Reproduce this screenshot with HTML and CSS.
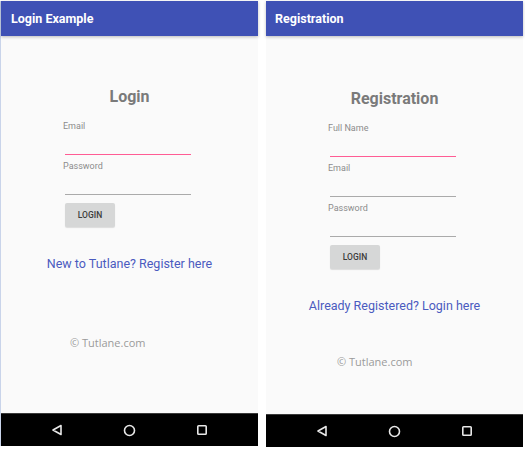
FILE: index.html
```html
<!DOCTYPE html>
<html>
<head>
<meta charset="utf-8">
<link rel="stylesheet" href="styles.css">
</head>
<body>
<div class="screens">
  <div class="phone phone-left">
    <div class="appbar">Login Example</div>
    <div class="content">
      <div class="title">Login</div>
      <div class="form">
        <div class="field">
          <div class="label">Email</div>
          <div class="input focused"></div>
        </div>
        <div class="field">
          <div class="label">Password</div>
          <div class="input"></div>
        </div>
        <div class="btn">LOGIN</div>
      </div>
      <div class="link">New to Tutlane? Register here</div>
      <div class="copy copy-left">© Tutlane.com</div>
    </div>
    <div class="navbar">
      <svg class="nav-ico" width="12" height="12" viewBox="0 0 12 12"><path d="M10 1.5 L2 6 L10 10.5 Z" fill="none" stroke="#e8e8e8" stroke-width="1.6" stroke-linejoin="round"/></svg>
      <svg class="nav-ico" width="13" height="13" viewBox="0 0 13 13"><circle cx="6.5" cy="6.5" r="5" fill="none" stroke="#e8e8e8" stroke-width="1.6"/></svg>
      <svg class="nav-ico" width="12" height="12" viewBox="0 0 12 12"><rect x="1.8" y="1.8" width="8.4" height="8.4" rx="0.8" fill="none" stroke="#e8e8e8" stroke-width="1.6"/></svg>
    </div>
  </div>
  <div class="phone phone-right">
    <div class="appbar">Registration</div>
    <div class="content">
      <div class="title">Registration</div>
      <div class="form">
        <div class="field">
          <div class="label">Full Name</div>
          <div class="input focused"></div>
        </div>
        <div class="field">
          <div class="label">Email</div>
          <div class="input"></div>
        </div>
        <div class="field">
          <div class="label">Password</div>
          <div class="input"></div>
        </div>
        <div class="btn">LOGIN</div>
      </div>
      <div class="link">Already Registered? Login here</div>
      <div class="copy copy-right">© Tutlane.com</div>
    </div>
    <div class="navbar">
      <svg class="nav-ico" width="12" height="12" viewBox="0 0 12 12"><path d="M10 1.5 L2 6 L10 10.5 Z" fill="none" stroke="#e8e8e8" stroke-width="1.6" stroke-linejoin="round"/></svg>
      <svg class="nav-ico" width="13" height="13" viewBox="0 0 13 13"><circle cx="6.5" cy="6.5" r="5" fill="none" stroke="#e8e8e8" stroke-width="1.6"/></svg>
      <svg class="nav-ico" width="12" height="12" viewBox="0 0 12 12"><rect x="1.8" y="1.8" width="8.4" height="8.4" rx="0.8" fill="none" stroke="#e8e8e8" stroke-width="1.6"/></svg>
    </div>
  </div>
</div>
</body>
</html>
```
FILE: styles.css
```css
html, body {
  margin: 0;
  padding: 0;
  background: #ffffff;
  font-family: Roboto, "Liberation Sans", sans-serif;
}
.screens {
  display: flex;
  gap: 8px;
  padding-top: 1px;
  width: 525px;
  height: 450px;
  box-sizing: border-box;
}
.phone {
  width: 257px;
  height: 445px;
  display: flex;
  flex-direction: column;
  background: #fafafa;
}
.phone-left {
  border-left: 1px solid #c9d4ea;
}
.phone-right {
  height: 446px;
}
.appbar {
  height: 35px;
  flex: none;
  background: #3f51b5;
  color: #ffffff;
  font-weight: 700;
  font-size: 12.5px;
  line-height: 35px;
  padding-left: 10px;
  box-shadow: 0 1px 3px rgba(0,0,0,0.25);
  position: relative;
  z-index: 1;
}
.phone-right .appbar {
  padding-left: 9px;
}
.content {
  flex: 1;
  display: flex;
  flex-direction: column;
  padding-top: 51px;
}
.phone-right .content {
  padding-top: 53px;
}
.title {
  text-align: center;
  font-size: 16px;
  font-weight: 700;
  line-height: 20px;
  height: 20px;
  color: #7a7a7a;
}
.form {
  margin-top: 13px;
  margin-left: 62px;
  width: 131px;
  display: flex;
  flex-direction: column;
  align-items: flex-start;
}
.field {
  width: 100%;
  margin-bottom: 5px;
}
.label {
  font-size: 9px;
  font-weight: 400;
  line-height: 12px;
  color: #8c8c8c;
}
.input {
  margin-left: 2px;
  width: 126px;
  height: 23px;
  box-sizing: border-box;
  border-bottom: 1px solid #aaaaaa;
}
.input.focused {
  border-bottom: 1.5px solid #ff4081;
  opacity: 0.85;
}
.btn {
  margin-top: 3px;
  margin-left: 2px;
  width: 50px;
  height: 24px;
  background: #d6d7d7;
  border-radius: 2px;
  box-shadow: 0 1px 1px rgba(0,0,0,0.12);
  font-size: 8.5px;
  font-weight: 500;
  color: #3c3c3c;
  text-align: center;
  line-height: 24px;
}
.link {
  margin-top: 29px;
  text-align: center;
  font-size: 12.5px;
  line-height: 16px;
  color: #4a5bbf;
}
.copy {
  font-family: "Open Sans", "DejaVu Sans", sans-serif;
  font-size: 11px;
  line-height: 14px;
  color: #9a9a9a;
}
.copy-left {
  margin-top: 64px;
  margin-left: 69px;
}
.copy-right {
  margin-top: 41px;
  margin-left: 71px;
}
.navbar {
  height: 33px;
  flex: none;
  background: #000000;
  border-top: 1px solid #3a3a3a;
  box-sizing: border-box;
  display: flex;
  align-items: center;
  justify-content: space-between;
  padding: 0 50px;
}
.nav-ico {
  display: block;
}
```
